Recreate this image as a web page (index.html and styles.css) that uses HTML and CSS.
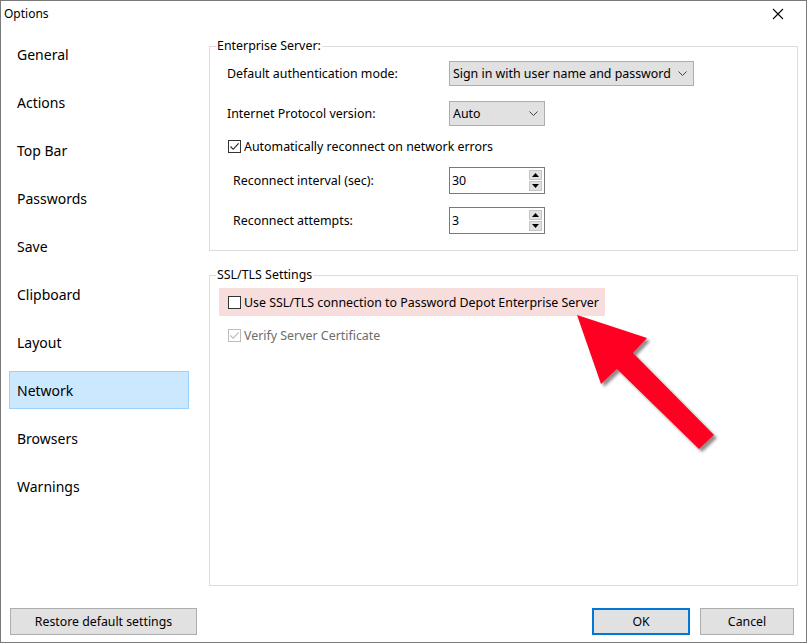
FILE: index.html
```html
<!DOCTYPE html>
<html>
<head>
<meta charset="utf-8">
<link rel="stylesheet" href="styles.css">
</head>
<body>
<div class="window">
  <div class="titlebar">
    <span class="title">Options</span>
    <span class="close">
      <svg width="12" height="12" viewBox="0 0 12 12"><path d="M1 1 L11 11 M11 1 L1 11" stroke="#000" stroke-width="1.1" fill="none"/></svg>
    </span>
  </div>
  <div class="content">
    <ul class="sidebar">
      <li class="item">General</li>
      <li class="item">Actions</li>
      <li class="item">Top Bar</li>
      <li class="item">Passwords</li>
      <li class="item">Save</li>
      <li class="item">Clipboard</li>
      <li class="item">Layout</li>
      <li class="item selected">Network</li>
      <li class="item">Browsers</li>
      <li class="item">Warnings</li>
    </ul>
    <div class="main">
      <fieldset class="group group-server">
        <legend>Enterprise Server:</legend>
        <div class="group-body server-body">
          <div class="row row-select">
            <span class="label">Default authentication mode:</span>
            <span class="select select-wide"><span>Sign in with user name and password</span><svg class="chev" width="9" height="6" viewBox="0 0 9 6"><path d="M0.5 0.5 L4.5 4.5 L8.5 0.5" stroke="#444" fill="none"/></svg></span>
          </div>
          <div class="row row-select row-gap">
            <span class="label">Internet Protocol version:</span>
            <span class="select select-narrow"><span>Auto</span><svg class="chev" width="9" height="6" viewBox="0 0 9 6"><path d="M0.5 0.5 L4.5 4.5 L8.5 0.5" stroke="#444" fill="none"/></svg></span>
          </div>
          <div class="row row-check">
            <span class="check checked"><svg width="11" height="11" viewBox="0 0 11 11"><path d="M1.5 5.5 L4.2 8.3 L9.6 2.4" stroke="#222" stroke-width="1.1" fill="none"/></svg></span>
            <span class="check-label">Automatically reconnect on network errors</span>
          </div>
          <div class="row row-spin">
            <span class="label label-indent">Reconnect interval (sec):</span>
            <span class="spin"><span class="spin-val">30</span><span class="spin-btns"><span class="sb"><svg width="7" height="4" viewBox="0 0 7 4"><path d="M0 4 L3.5 0 L7 4 Z" fill="#000"/></svg></span><span class="sb"><svg width="7" height="4" viewBox="0 0 7 4"><path d="M0 0 L3.5 4 L7 0 Z" fill="#000"/></svg></span></span></span>
          </div>
          <div class="row row-spin">
            <span class="label label-indent">Reconnect attempts:</span>
            <span class="spin"><span class="spin-val">3</span><span class="spin-btns"><span class="sb"><svg width="7" height="4" viewBox="0 0 7 4"><path d="M0 4 L3.5 0 L7 4 Z" fill="#000"/></svg></span><span class="sb"><svg width="7" height="4" viewBox="0 0 7 4"><path d="M0 0 L3.5 4 L7 0 Z" fill="#000"/></svg></span></span></span>
          </div>
        </div>
      </fieldset>
      <fieldset class="group group-ssl">
        <legend>SSL/TLS Settings</legend>
        <div class="group-body ssl-body">
          <div class="highlight">
            <span class="check"></span>
            <span class="check-label">Use SSL/TLS connection to Password Depot Enterprise Server</span>
          </div>
          <div class="row row-verify">
            <span class="check disabled"><svg width="11" height="11" viewBox="0 0 11 11"><path d="M1.5 5.5 L4.2 8.3 L9.6 2.4" stroke="#b5b5b5" stroke-width="1.1" fill="none"/></svg></span>
            <span class="check-label muted">Verify Server Certificate</span>
          </div>
        </div>
      </fieldset>
    </div>
  </div>
  <div class="footer">
    <button class="btn btn-restore">Restore default settings</button>
    <span class="spacer"></span>
    <button class="btn btn-ok">OK</button>
    <button class="btn btn-cancel">Cancel</button>
  </div>
  <svg class="arrow" width="808" height="644" viewBox="0 0 808 644">
    <defs>
      <filter id="sh" x="-20%" y="-20%" width="140%" height="140%">
        <feDropShadow dx="3" dy="3" stdDeviation="1.6" flood-color="#000" flood-opacity="0.45"/>
      </filter>
    </defs>
    <polygon points="577,315 647,338 633,353 714,435 699,449 617,369 601,384" fill="#ff0022" filter="url(#sh)"/>
  </svg>
</div>
</body>
</html>
```
FILE: styles.css
```css
html, body {
  margin: 0;
  padding: 0;
  background: #ffffff;
}
body {
  font-family: "Noto Sans", "Open Sans", sans-serif;
  font-size: 12.4px;
  color: #000;
  width: 808px;
  height: 644px;
  overflow: hidden;
}
.window {
  position: relative;
  box-sizing: border-box;
  width: 807px;
  height: 643px;
  border: 1px solid #7a7a7a;
  display: flex;
  flex-direction: column;
  background: #fff;
}
.titlebar {
  height: 26px;
  display: flex;
  align-items: center;
  padding-left: 3px;
  padding-right: 22px;
}
.title {
  flex: 1;
  font-size: 12px;
  margin-top: -1px;
}
.close {
  display: flex;
  margin-top: -1px;
}
.content {
  flex: 1;
  display: flex;
}
.sidebar {
  list-style: none;
  margin: 0;
  padding: 8px 0 0 8px;
  width: 180px;
}
.item {
  box-sizing: border-box;
  height: 38px;
  margin-bottom: 10px;
  padding-left: 7px;
  border: 1px solid transparent;
  display: flex;
  align-items: center;
  font-size: 14px;
}
.item.selected {
  background: #cce8ff;
  border-color: #99d1ff;
}
.main {
  flex: 1;
  margin-left: 20px;
  margin-right: 8px;
  padding-top: 11px;
  display: flex;
  flex-direction: column;
}
.group {
  margin: 0;
  border: 1px solid #dcdcdc;
  padding: 0;
  min-width: 0;
}
.group legend {
  margin-left: 6px;
  padding: 0 1px;
  line-height: 16px;
  height: 16px;
}
.server-body {
  padding: 7px 0 16px 17px;
}
.row {
  display: flex;
  align-items: center;
}
.row-select {
  height: 25px;
}
.row-gap {
  margin-top: 15px;
}
.label {
  width: 222px;
}
.label-indent {
  box-sizing: border-box;
  padding-left: 6px;
}
.select {
  box-sizing: border-box;
  height: 25px;
  background: #e1e1e1;
  border: 1px solid #adadad;
  display: flex;
  align-items: center;
  padding-left: 3px;
  padding-right: 6px;
}
.select span {
  flex: 1;
}
.select-wide {
  width: 245px;
}
.select-narrow {
  width: 96px;
}
.row-check {
  height: 16px;
  margin-top: 12px;
  padding-left: 1px;
}
.check {
  box-sizing: border-box;
  width: 13px;
  height: 13px;
  border: 1px solid #333;
  background: #fff;
  display: inline-flex;
  align-items: center;
  justify-content: center;
  flex: none;
}
.check.disabled {
  border-color: #bcbcbc;
}
.check-label {
  margin-left: 3px;
}
.muted {
  color: #6d6d6d;
}
.row-spin {
  height: 27px;
  margin-top: 13px;
}
.spin {
  box-sizing: border-box;
  width: 96px;
  height: 27px;
  border: 1px solid #7a7a7a;
  background: #fff;
  display: flex;
  align-items: center;
  padding-left: 2px;
  padding-right: 2px;
}
.spin-val {
  flex: 1;
}
.spin-btns {
  display: flex;
  flex-direction: column;
  gap: 1px;
}
.sb {
  box-sizing: border-box;
  width: 13px;
  height: 10px;
  background: #e1e1e1;
  border: 1px solid #c4c4c4;
  display: flex;
  align-items: center;
  justify-content: center;
}
.group-ssl {
  margin-top: 16px;
  flex: 1;
}
.ssl-body {
  padding: 5px 0 0 9px;
}
.highlight {
  display: inline-flex;
  align-items: center;
  height: 28px;
  background: #f8dddd;
  padding: 0 6px 0 9px;
}
.row-verify {
  height: 16px;
  margin-top: 11px;
  padding-left: 9px;
}
.footer {
  height: 56px;
  box-sizing: border-box;
  display: flex;
  align-items: flex-start;
  padding: 22px 12px 0 9px;
}
.spacer {
  flex: 1;
}
.btn {
  box-sizing: border-box;
  height: 27px;
  font-family: inherit;
  font-size: 12.3px;
  background: #e1e1e1;
  border: 1px solid #adadad;
  margin: 0;
  padding: 0;
  color: #000;
}
.btn-restore {
  width: 187px;
}
.btn-ok {
  width: 98px;
  border: 2px solid #0078d7;
  margin-right: 10px;
}
.btn-cancel {
  width: 94px;
}
.arrow {
  position: absolute;
  left: -1px;
  top: -1px;
  pointer-events: none;
}
```
